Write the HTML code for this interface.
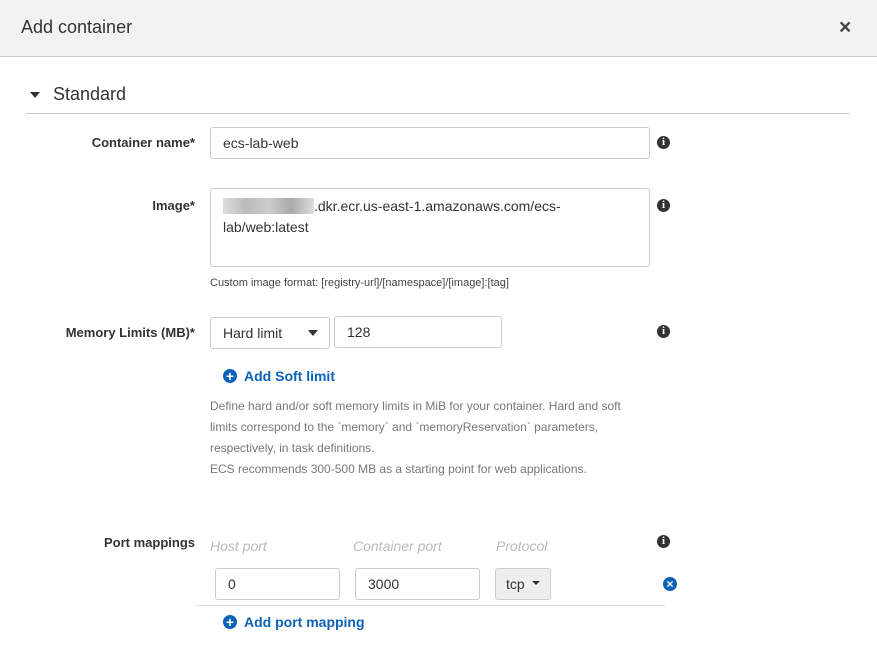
<!DOCTYPE html>
<html><head><style>
body{margin:0;width:877px;height:656px;overflow:hidden;background:#fff;font-family:"Liberation Sans",sans-serif;position:relative;color:#333}
.a{position:absolute}
.hdr{left:0;top:0;width:877px;height:56px;background:#f2f2f2;border-bottom:1px solid #ccc}
.lbl{font-size:13px;font-weight:bold;color:#333;text-align:right;width:195px;left:0}
.in{border:1px solid #ccc;border-radius:3px;background:#fff;box-sizing:border-box;font-size:14px;color:#333;padding-left:12px}
.info{width:13px;height:13px;border-radius:50%;background:#333;color:#fff;font:bold 11px "Liberation Serif",serif;text-align:center;line-height:13px}
.link{color:#0b62b8;font-weight:bold;font-size:14px}
.plus{width:14px;height:14px;border-radius:50%;background:#0b62b8;color:#fff;font:bold 14px/14px "Liberation Sans";text-align:center}
.help{font-size:12px;color:#777;line-height:21px}
.ph{font-size:14px;color:#bbb;font-style:italic}
</style></head><body>
<div class="a hdr"></div>
<div class="a" style="left:21px;top:17px;font-size:18px;color:#333">Add container</div>
<div class="a" style="left:839px;top:16px;font-size:21px;font-weight:bold;color:#444">×</div>
<div class="a" style="left:30px;top:92px;width:0;height:0;border-left:5px solid transparent;border-right:5px solid transparent;border-top:6px solid #333"></div>
<div class="a" style="left:53px;top:84px;font-size:18px;color:#333">Standard</div>
<div class="a" style="left:26px;top:113px;width:824px;height:1px;background:#ccc"></div>

<div class="a lbl" style="top:135px">Container name*</div>
<div class="a in" style="left:210px;top:127px;width:440px;height:32px;line-height:30px">ecs-lab-web</div>
<div class="a info" style="left:657px;top:136px">i</div>

<div class="a lbl" style="top:198px">Image*</div>
<div class="a in" style="left:210px;top:188px;width:440px;height:79px;padding-top:7px;line-height:21px"><span style="background:linear-gradient(90deg,#ddd,#bbb,#ccc,#aaa,#ddd);color:transparent">xxxxxxxxxxxxx</span>.dkr.ecr.us-east-1.amazonaws.com/ecs-<br>lab/web:latest</div>
<div class="a info" style="left:657px;top:199px">i</div>
<div class="a" style="left:210px;top:277px;font-size:11px;color:#444">Custom image format: [registry-url]/[namespace]/[image]:[tag]</div>

<div class="a lbl" style="top:325px">Memory Limits (MB)*</div>
<div class="a in" style="left:210px;top:317px;width:120px;height:32px;line-height:30px">Hard limit</div>
<div class="a" style="left:308px;top:330px;border-left:5px solid transparent;border-right:5px solid transparent;border-top:6px solid #333"></div>
<div class="a in" style="left:334px;top:316px;width:168px;height:32px;line-height:30px">128</div>
<div class="a info" style="left:657px;top:325px">i</div>
<div class="a plus" style="left:223px;top:369px">+</div>
<div class="a link" style="left:244px;top:368px">Add Soft limit</div>
<div class="a help" style="left:210px;top:396px">Define hard and/or soft memory limits in MiB for your container. Hard and soft<br>limits correspond to the `memory` and `memoryReservation` parameters,<br>respectively, in task definitions.<br>ECS recommends 300-500 MB as a starting point for web applications.</div>

<div class="a lbl" style="top:535px">Port mappings</div>
<div class="a ph" style="left:210px;top:538px">Host port</div>
<div class="a ph" style="left:353px;top:538px">Container port</div>
<div class="a ph" style="left:496px;top:538px">Protocol</div>
<div class="a info" style="left:657px;top:535px">i</div>
<div class="a in" style="left:215px;top:568px;width:125px;height:32px;line-height:30px">0</div>
<div class="a in" style="left:355px;top:568px;width:125px;height:32px;line-height:30px">3000</div>
<div class="a in" style="left:495px;top:568px;width:56px;height:32px;line-height:30px;background:#eee;padding-left:10px">tcp</div>
<div class="a" style="left:532px;top:581px;border-left:4px solid transparent;border-right:4px solid transparent;border-top:4px solid #333"></div>
<div class="a plus" style="left:663px;top:577px;font-size:12px">×</div>
<div class="a" style="left:195px;top:605px;width:470px;height:1px;background:#ddd"></div>
<div class="a plus" style="left:223px;top:615px">+</div>
<div class="a link" style="left:244px;top:614px">Add port mapping</div>
</body></html>
